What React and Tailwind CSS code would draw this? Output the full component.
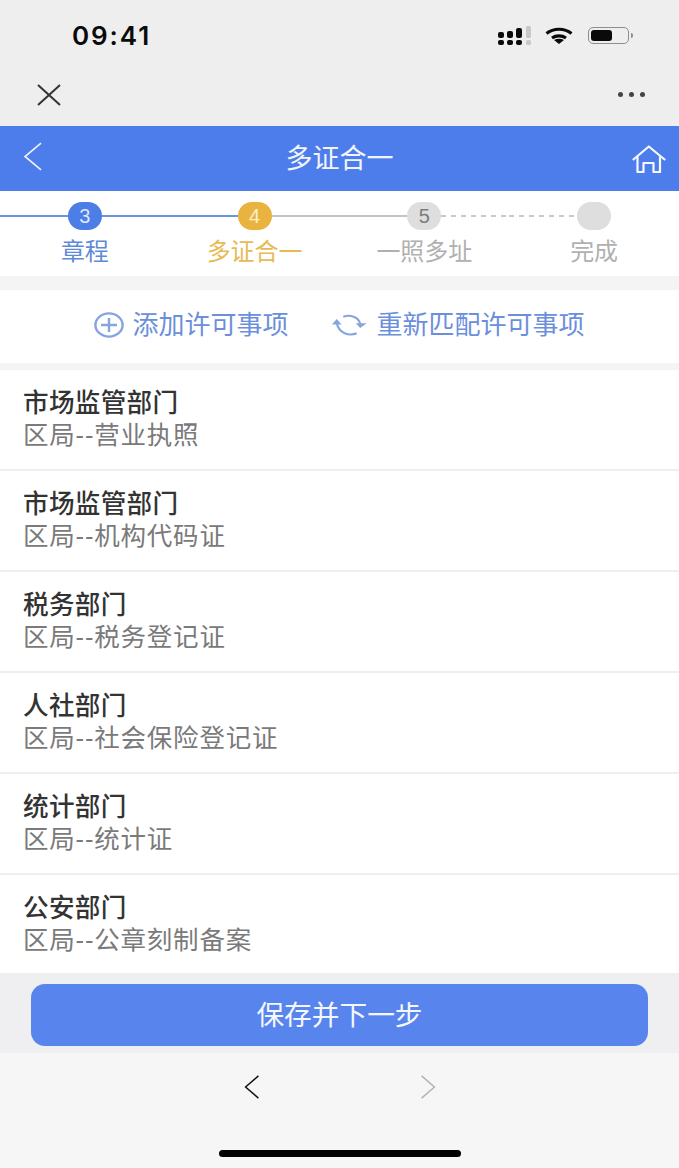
const FONT = "font-['Noto_Sans_CJK_SC','Noto_Sans',sans-serif]";

const steps = [
  { num: "3", label: "章程", circle: "bg-[#4d7de6] text-[#dfe8fb]", text: "text-[#5f8ad8]", left: "bg-[#6c94dc]", right: "bg-[#6c94dc]" },
  { num: "4", label: "多证合一", circle: "bg-[#e9b33f] text-[#fbeecd]", text: "text-[#e6bb55]", left: "bg-[#6c94dc]", right: "bg-[#c4c4c4]" },
  { num: "5", label: "一照多址", circle: "bg-[#dedede] text-[#7c7c7c]", text: "text-[#b0b0b0]", left: "bg-[#c4c4c4]", right: "dashed" },
  { num: "", label: "完成", circle: "bg-[#dedede] text-[#7c7c7c]", text: "text-[#b0b0b0]", left: "dashed", right: "none" },
];

const rows = [
  ["市场监管部门", "区局--营业执照"],
  ["市场监管部门", "区局--机构代码证"],
  ["税务部门", "区局--税务登记证"],
  ["人社部门", "区局--社会保险登记证"],
  ["统计部门", "区局--统计证"],
  ["公安部门", "区局--公章刻制备案"],
];

function SignalIcon() {
  return (
    <svg width="34" height="19" viewBox="0 0 34 19" fill="#0a0a0a">
      <rect x="0" y="6" width="6" height="6" rx="2" />
      <rect x="9" y="5" width="6" height="7" rx="2" />
      <rect x="18" y="2" width="6" height="10" rx="2" />
      <rect x="28" y="0" width="5" height="12" rx="1.5" fill="#c8c8c8" />
      <rect x="0" y="14" width="6" height="5" rx="2" />
      <rect x="9" y="14" width="6" height="5" rx="2" />
      <rect x="18" y="14" width="6" height="5" rx="2" />
      <rect x="28" y="14" width="5" height="5" rx="1.5" fill="#c8c8c8" />
    </svg>
  );
}

function WifiIcon() {
  return (
    <svg width="28" height="17" viewBox="0 0 28 17" fill="none" stroke="#0a0a0a" strokeWidth="3.2">
      <path d="M1.5 6.5C8.5 .8 19.5 .8 26.5 6.5" />
      <path d="M7 11c4-2.8 10-2.8 14 0" />
      <path d="M14 17l-5-4c3-1.6 7-1.6 10 0z" fill="#0a0a0a" stroke="none" />
    </svg>
  );
}

function BatteryIcon() {
  return (
    <div className="flex items-center gap-[2px]">
      <div className="w-[41px] h-[17px] rounded-[5px] border-[1.5px] border-[#8e8e8e] p-[2px]">
        <div className="w-[21px] h-full rounded-[3px] bg-[#0a0a0a]" />
      </div>
      <div className="w-[2px] h-[5px] rounded-r bg-[#8e8e8e]" />
    </div>
  );
}

function StepLine({ kind }) {
  if (kind === "none") return <div className="flex-1" />;
  if (kind === "dashed") {
    return <div className="flex-1 h-[2px] bg-[repeating-linear-gradient(90deg,#c8c8c8_0_5px,transparent_5px_10px)]" />;
  }
  return <div className={`flex-1 h-[2px] ${kind}`} />;
}

function Chevron({ direction, color, width, height, strokeWidth }) {
  const d = direction === "left" ? "M18 1L2 14l16 13" : "M2 1l16 13L2 27";
  return (
    <svg width={width} height={height} viewBox="0 0 20 28" fill="none" stroke={color} strokeWidth={strokeWidth} preserveAspectRatio="none">
      <path d={d} />
    </svg>
  );
}

export default function App() {
  return (
    <div className={`${FONT} w-[679px] h-[1168px] flex flex-col overflow-hidden bg-white`}>
      <div className="h-[126px] bg-[#eeeeee] flex flex-col shrink-0">
        <div className="h-[72px] pl-[72px] pr-[46px] pb-[2px] flex items-center justify-between">
          <span className="font-['Inter',sans-serif] font-semibold text-[26px] tracking-[1.9px] text-[#0a0a0a]">09:41</span>
          <div className="flex items-center">
            <SignalIcon />
            <div className="ml-[13px]">
              <WifiIcon />
            </div>
            <div className="ml-[15px]">
              <BatteryIcon />
            </div>
          </div>
        </div>
        <div className="flex-1 pl-[36px] pr-[34px] flex items-center justify-between pb-[9px]">
          <svg width="26" height="22" viewBox="0 0 26 22" fill="none" stroke="#333" strokeWidth="2">
            <path d="M2 1l22 20M24 1L2 21" />
          </svg>
          <div className="flex gap-[6px]">
            <div className="w-[5px] h-[5px] rounded-full bg-[#444]" />
            <div className="w-[5px] h-[5px] rounded-full bg-[#444]" />
            <div className="w-[5px] h-[5px] rounded-full bg-[#444]" />
          </div>
        </div>
      </div>

      <div className="h-[65px] bg-[#4d7deb] flex items-center justify-between pl-[23px] pr-[13px] shrink-0">
        <div className="w-[24px] pb-[4px]">
          <Chevron direction="left" color="#eef3fd" width={20} height={29} strokeWidth={1.6} />
        </div>
        <span className="text-[27px] leading-[36px] pb-[4px] text-[#f2f5fd]">多证合一</span>
        <svg width="34" height="28" viewBox="0 0 34 28" fill="none" stroke="#f5f8fe" strokeWidth="2.2" strokeLinejoin="round">
          <path d="M.8 15L16.8 1.5 33.2 15" />
          <path d="M5.5 11.5V27h6V18h10v9h6.5V11.5" />
        </svg>
      </div>

      <div className="h-[85px] grid grid-cols-4 pt-[11px] shrink-0">
        {steps.map((step) => (
          <div key={step.label} className="flex flex-col">
            <div className="flex items-center">
              <StepLine kind={step.left} />
              <div className={`w-[34px] h-[28px] rounded-full flex items-center justify-center font-['Liberation_Sans',sans-serif] text-[20px] ${step.circle}`}>
                {step.num}
              </div>
              <StepLine kind={step.right} />
            </div>
            <span className={`text-center text-[24px] leading-[36px] mt-[2px] ${step.text}`}>{step.label}</span>
          </div>
        ))}
      </div>

      <div className="h-[14px] bg-[#f4f4f4] shrink-0" />

      <div className="h-[73px] flex items-center justify-center gap-[43px] text-[26px] text-[#6b8fdc] pb-[4px] shrink-0">
        <div className="flex items-center gap-[8px]">
          <svg width="30" height="26" viewBox="0 0 30 26" fill="none" stroke="#86a4dd" strokeWidth="2.4">
            <ellipse cx="15" cy="13" rx="13.6" ry="11.6" />
            <path d="M7 13h16M15 6v14" />
          </svg>
          <span className="leading-[36px] pb-[4px]">添加许可事项</span>
        </div>
        <div className="flex items-center gap-[9px]">
          <svg width="36" height="22" viewBox="0 0 36 22" fill="none" stroke="#86a4dd" strokeWidth="2.2">
            <path d="M11.3 2.7C18 .4 26.5 2.5 28.2 10" />
            <path d="M24.7 19.3C17 22.3 7 19.5 4.7 9" />
            <path d="M23.7 9.2L28.2 14l6.5-4.8z" fill="#86a4dd" stroke="none" />
            <path d="M0 10.5L4.7 5l5 5.5z" fill="#86a4dd" stroke="none" />
          </svg>
          <span className="leading-[36px] pb-[4px]">重新匹配许可事项</span>
        </div>
      </div>

      <div className="h-[7px] bg-[#f4f4f4] shrink-0" />

      <div className="flex-1 flex flex-col overflow-hidden font-['Liberation_Sans','Noto_Sans_CJK_SC',sans-serif]">
        {rows.map(([title, sub], i) => (
          <div
            key={sub}
            className={`h-[101px] shrink-0 pl-[23px] pt-[17px] ${i < rows.length - 1 ? "border-b-2 border-[#efefef]" : ""}`}
          >
            <div className="text-[25.6px] tracking-[0.3px] leading-[32px] font-medium text-[#333333]">{title}</div>
            <div className="text-[25.5px] tracking-[0.8px] leading-[32px] text-[#7a7a7a]">{sub}</div>
          </div>
        ))}
      </div>

      <div className="h-[80px] bg-[#efeff2] px-[31px] pt-[11px] shrink-0">
        <div className="h-[62px] rounded-[14px] bg-[#5885ed] flex items-center justify-center text-[27.7px] leading-[36px] pb-[4px] text-[#f5f7fe]">
          保存并下一步
        </div>
      </div>

      <div className="h-[115px] bg-[#f6f6f7] flex flex-col items-center shrink-0">
        <div className="flex items-center gap-[160px] mt-[22px]">
          <Chevron direction="left" color="#111" width={16} height={24} strokeWidth={1.8} />
          <Chevron direction="right" color="#b2b2b2" width={16} height={24} strokeWidth={1.8} />
        </div>
        <div className="mt-[51px] w-[242px] h-[7px] rounded-full bg-black" />
      </div>
    </div>
  );
}
